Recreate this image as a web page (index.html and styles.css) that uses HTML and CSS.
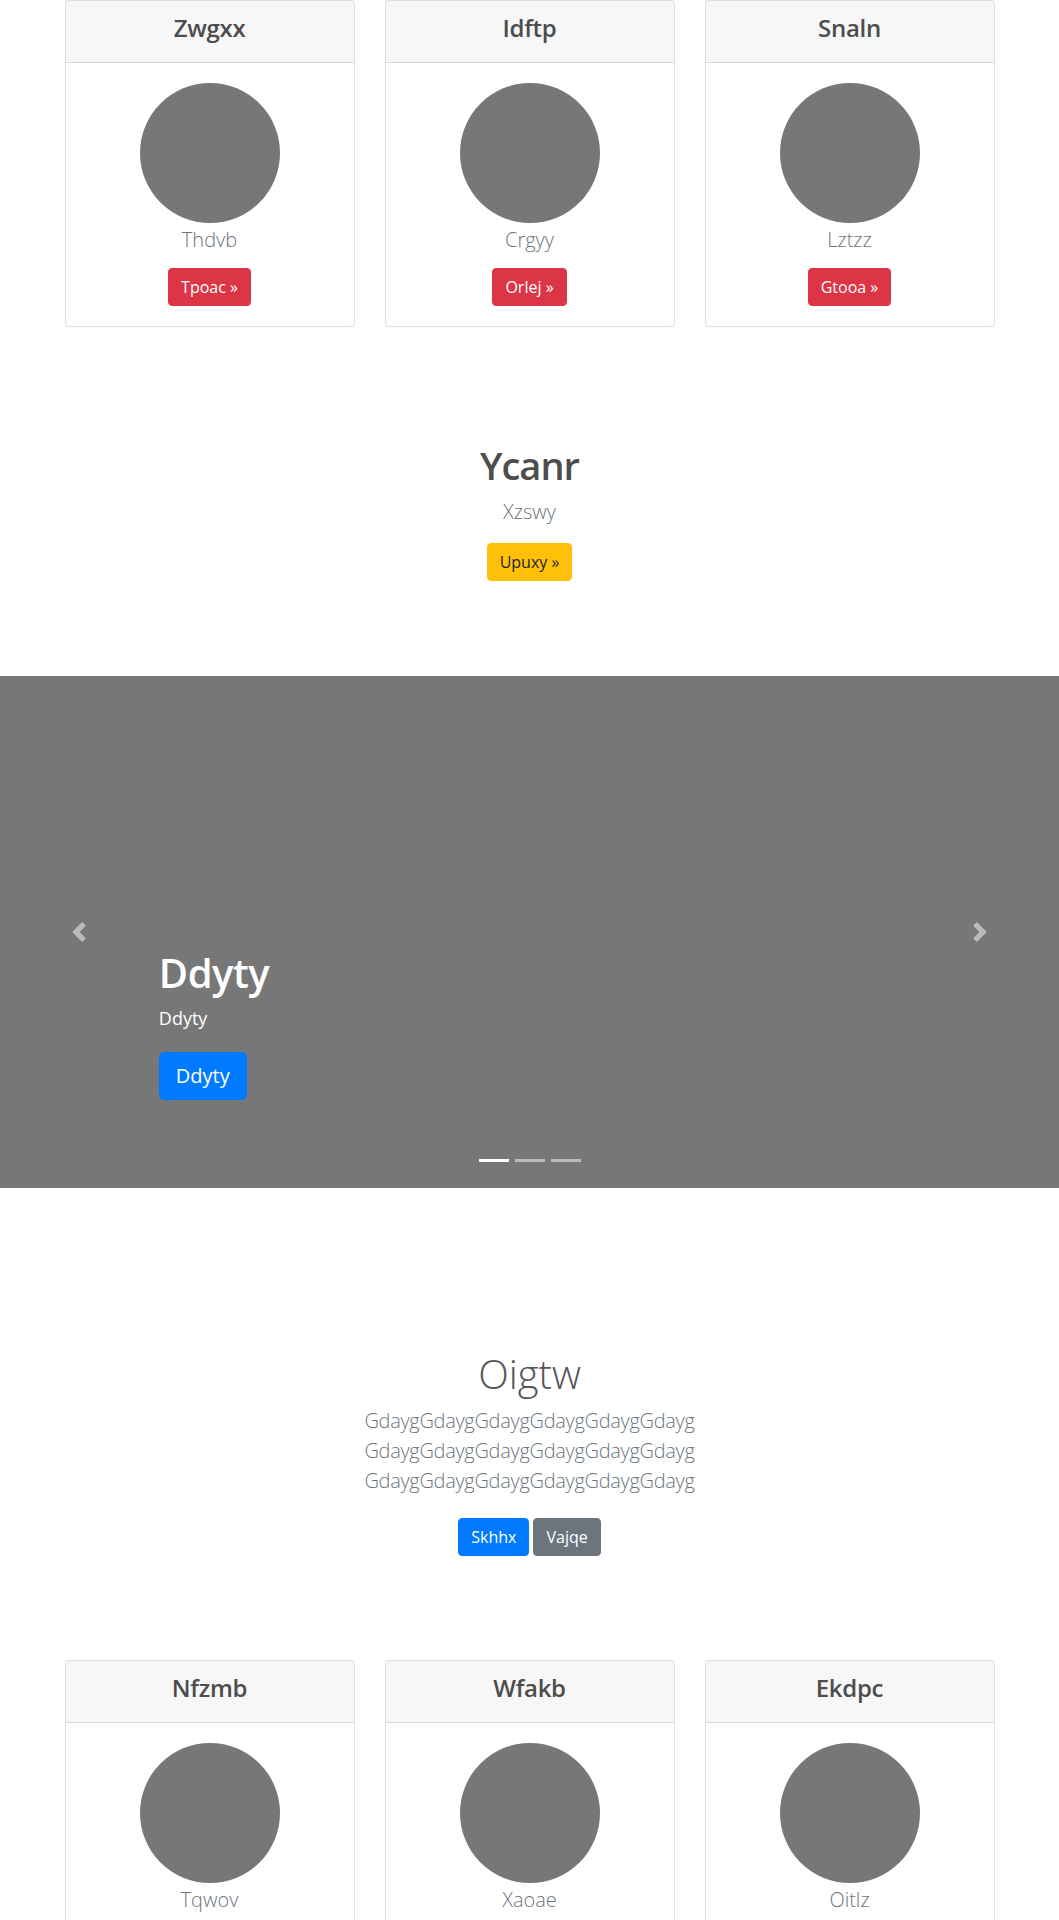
FILE: index.html
```html
<!DOCTYPE html>
<html lang="en">
<head>
<meta charset="utf-8">
<title>Page</title>
<link rel="stylesheet" href="styles.css">
</head>
<body>
<div class="container">
  <div class="card-row">
    <div class="card">
      <div class="card-header"><h4>Zwgxx</h4></div>
      <div class="card-body">
        <div class="avatar"></div>
        <p class="name">Thdvb</p>
        <a class="btn btn-danger" href="#">Tpoac &raquo;</a>
      </div>
    </div>
    <div class="card">
      <div class="card-header"><h4>Idftp</h4></div>
      <div class="card-body">
        <div class="avatar"></div>
        <p class="name">Crgyy</p>
        <a class="btn btn-danger" href="#">Orlej &raquo;</a>
      </div>
    </div>
    <div class="card">
      <div class="card-header"><h4>Snaln</h4></div>
      <div class="card-body">
        <div class="avatar"></div>
        <p class="name">Lztzz</p>
        <a class="btn btn-danger" href="#">Gtooa &raquo;</a>
      </div>
    </div>
  </div>
</div>

<section class="promo">
  <h1 class="promo-title">Ycanr</h1>
  <p class="lead">Xzswy</p>
  <a class="btn btn-warning" href="#">Upuxy &raquo;</a>
</section>

<div class="carousel">
  <a class="control" href="#" aria-label="Previous">
    <svg width="20" height="20" viewBox="0 0 8 8" fill="#fff"><path d="M5.25 0l-4 4 4 4 1.5-1.5L4.25 4l2.5-2.5L5.25 0z"/></svg>
  </a>
  <div class="caption">
    <h1>Ddyty</h1>
    <p>Ddyty</p>
    <a class="btn btn-lg btn-primary" href="#">Ddyty</a>
  </div>
  <a class="control" href="#" aria-label="Next">
    <svg width="20" height="20" viewBox="0 0 8 8" fill="#fff"><path d="M2.75 0l-1.5 1.5L3.75 4l-2.5 2.5L2.75 8l4-4-4-4z"/></svg>
  </a>
  <ol class="indicators">
    <li class="active"></li>
    <li></li>
    <li></li>
  </ol>
</div>

<section class="jumbo">
  <div class="jumbo-inner">
    <h1 class="jumbo-title">Oigtw</h1>
    <p class="lead">GdaygGdaygGdaygGdaygGdaygGdayg<br>GdaygGdaygGdaygGdaygGdaygGdayg<br>GdaygGdaygGdaygGdaygGdaygGdayg</p>
    <div class="btn-pair">
      <a class="btn btn-primary" href="#">Skhhx</a>
      <a class="btn btn-secondary" href="#">Vajqe</a>
    </div>
  </div>
</section>

<div class="container">
  <div class="card-row">
    <div class="card">
      <div class="card-header"><h4>Nfzmb</h4></div>
      <div class="card-body">
        <div class="avatar"></div>
        <p class="name">Tqwov</p>
      </div>
    </div>
    <div class="card">
      <div class="card-header"><h4>Wfakb</h4></div>
      <div class="card-body">
        <div class="avatar"></div>
        <p class="name">Xaoae</p>
      </div>
    </div>
    <div class="card">
      <div class="card-header"><h4>Ekdpc</h4></div>
      <div class="card-body">
        <div class="avatar"></div>
        <p class="name">Oitlz</p>
      </div>
    </div>
  </div>
</div>
</body>
</html>
```

FILE: styles.css
```css
* { box-sizing: border-box; }

body {
  margin: 0;
  font-family: "Open Sans", "Noto Sans", "Liberation Sans", sans-serif;
  font-size: 16px;
  line-height: 1.5;
  color: #555;
  background: #fff;
}

.container {
  max-width: 960px;
  margin: 0 auto;
  padding: 0 15px;
}

.card-row {
  display: grid;
  grid-template-columns: repeat(3, 1fr);
  gap: 30px;
}

.card {
  border: 1px solid rgba(0, 0, 0, .125);
  border-radius: 4px;
  text-align: center;
  background: #fff;
  overflow: hidden;
}

.card-header {
  padding: 13px 20px 11px;
  background: rgba(0, 0, 0, .03);
  border-bottom: 1px solid rgba(0, 0, 0, .125);
}

.card-header h4 {
  margin: 0 0 8px;
  font-size: 24px;
  line-height: 1.2;
  font-weight: 600;
  letter-spacing: -0.3px;
  color: #4d4d4d;
}

.card-body {
  padding: 20px;
  display: flex;
  flex-direction: column;
  align-items: center;
}

.avatar {
  width: 140px;
  height: 140px;
  border-radius: 50%;
  background: #777;
  margin-bottom: 2px;
}

.name {
  margin: 0 0 13px;
  font-size: 20px;
  line-height: 30px;
  font-weight: 300;
  color: #6c757d;
}

.btn {
  display: inline-block;
  padding: 6px 12px;
  font-size: 16px;
  line-height: 24px;
  font-weight: 400;
  border: 1px solid transparent;
  border-radius: 4px;
  text-decoration: none;
  white-space: nowrap;
}

.btn-lg {
  padding: 8px 16px;
  font-size: 20px;
  line-height: 30px;
  border-radius: 5px;
}

.btn-danger { background: #dc3545; border-color: #dc3545; color: #fff; }
.btn-warning { background: #ffc107; border-color: #ffc107; color: #212529; }
.btn-primary { background: #007bff; border-color: #007bff; color: #fff; }
.btn-secondary { background: #6c757d; border-color: #6c757d; color: #fff; }

.lead {
  font-size: 20px;
  line-height: 30px;
  font-weight: 300;
  color: #6c757d;
}

/* promo */
.promo {
  text-align: center;
  padding: 114px 0 95px;
}

.promo-title {
  margin: 0 0 8px;
  font-size: 38px;
  line-height: 48px;
  font-weight: 600;
  letter-spacing: -1px;
  color: #4d4d4d;
}

.promo .lead {
  margin: 0 0 16px;
}

/* carousel */
.carousel {
  position: relative;
  height: 512px;
  background: #777;
  display: grid;
  grid-template-columns: 15% 1fr 15%;
}

.control {
  display: flex;
  align-items: center;
  justify-content: center;
  opacity: .5;
}

.control svg { display: block; }

.caption {
  align-self: end;
  padding-bottom: 88px;
  display: flex;
  flex-direction: column;
  align-items: flex-start;
  color: #fff;
}

.caption h1 {
  margin: 0 0 8px;
  font-size: 40px;
  line-height: 48px;
  font-weight: 600;
  letter-spacing: -0.5px;
}

.caption p {
  margin: 0 0 20px;
  font-size: 18px;
  line-height: 27px;
  font-weight: 500;
}

.indicators {
  position: absolute;
  left: 0;
  right: 0;
  bottom: 26px;
  margin: 0;
  padding: 0;
  list-style: none;
  display: flex;
  justify-content: center;
  gap: 6px;
}

.indicators li {
  width: 30px;
  height: 3px;
  background: rgba(255, 255, 255, .5);
}

.indicators li.active { background: #fff; }

/* jumbotron */
.jumbo {
  text-align: center;
  padding: 162px 15px 104px;
}

.jumbo-inner {
  max-width: 640px;
  margin: 0 auto;
}

.jumbo-title {
  margin: 0 0 8px;
  font-size: 40px;
  line-height: 48px;
  font-weight: 300;
  color: #555;
}

.jumbo .lead {
  margin: 0 0 22px;
  letter-spacing: -0.3px;
}

.btn-pair {
  display: flex;
  justify-content: center;
  gap: 4px;
}
```
